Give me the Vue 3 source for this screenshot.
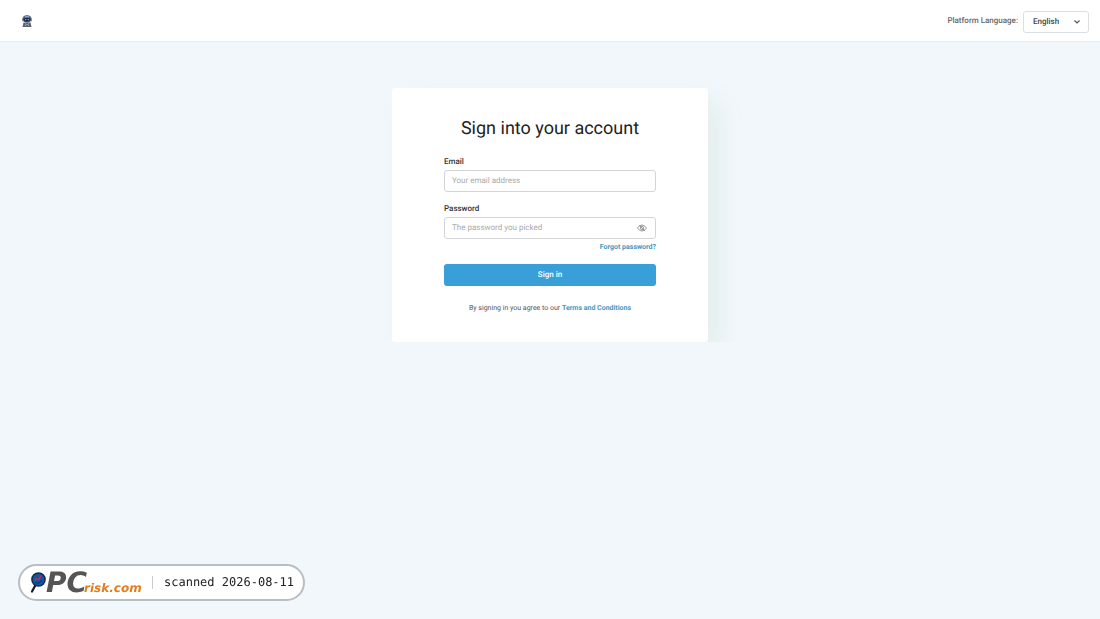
<script setup>
import { ref } from 'vue'

const language = ref('English')
const email = ref('')
const password = ref('')
const shown = ref(false)
</script>

<template>
  <div class="page">
    <header class="topbar">
      <a class="brand" href="#" aria-label="Home">
        <svg viewBox="0 0 20 24" width="10" height="12" aria-hidden="true">
          <rect x="0" y="5" width="4" height="8" rx="2" fill="#8b919a" />
          <rect x="16" y="5" width="4" height="8" rx="2" fill="#8b919a" />
          <path d="M3 2.500Q10-2 17 2.500L18 9Q17 15 10 15T2 9Z" fill="#33486b" />
          <path d="M5 2.500Q10 0 15 2.500V5H5Z" fill="#93a7c4" />
          <rect x="4" y="6" width="12" height="6" rx="3" fill="#14264a" />
          <circle cx="7.500" cy="9" r="1.300" fill="#8fc0f5" />
          <circle cx="12.500" cy="9" r="1.300" fill="#8fc0f5" />
          <path d="M3 15H17L19 24H1Z" fill="#5c626b" />
          <path d="M6 17L9 19L6 22M14 17L11 19L14 22" fill="none" stroke="#c5cad1" stroke-width="1.300" />
        </svg>
      </a>
      <div class="language">
        <label for="language">Platform Language:</label>
        <div class="select">
          <select id="language" v-model="language">
            <option>English</option>
          </select>
          <svg class="chevron" viewBox="0 0 8 8" width="8" height="8" aria-hidden="true">
            <path d="M1.500 2.500L4 5L6.500 2.500" fill="none" stroke="#555" stroke-width="1.200" />
          </svg>
        </div>
      </div>
    </header>

    <main class="content">
      <form class="card" @submit.prevent>
        <h1>Sign into your account</h1>
        <div class="field">
          <label for="email">Email</label>
          <input id="email" v-model="email" type="email" placeholder="Your email address" />
        </div>
        <div class="field">
          <label for="password">Password</label>
          <div class="secret">
            <input id="password" v-model="password" :type="shown ? 'text' : 'password'" placeholder="The password you picked" />
            <button class="reveal" type="button" aria-label="Show password" @click="shown = !shown">
              <svg viewBox="0 0 20 16" width="10" height="8" aria-hidden="true">
                <path d="M1 8Q5 2 10 2T19 8Q15 14 10 14T1 8Z" fill="none" stroke="#999" stroke-width="2" />
                <circle cx="10" cy="8" r="3.200" fill="none" stroke="#999" stroke-width="2" />
                <path d="M4 2L16 14" stroke="#999" stroke-width="2" />
              </svg>
            </button>
          </div>
        </div>
        <a class="forgot" href="#">Forgot password?</a>
        <button class="submit" type="submit">Sign in</button>
        <p class="terms">By signing in you agree to our <a href="#">Terms and Conditions</a></p>
      </form>
    </main>

    <aside class="stamp">
      <span class="logo">
        <svg viewBox="0 0 16 22" width="16" height="22" aria-hidden="true">
          <path d="M5.500 13L2 19.500" stroke="#111b2b" stroke-width="2.200" stroke-linecap="round" />
          <circle cx="8.500" cy="7.500" r="6.600" fill="#1556a4" stroke="#14284a" stroke-width="1.500" />
          <path d="M5 8.500L7 6.500L9 7.500L11 3.500" fill="none" stroke="#cf2945" stroke-width="1.300" />
          <path d="M5 10L8 11.500L12 8.500" fill="none" stroke="#0d3b7c" stroke-width="1.300" />
        </svg>
        <span class="pc">PC</span><span class="risk">risk.com</span>
      </span>
      <span class="rule"></span>
      <span class="date">scanned 2026-08-11</span>
    </aside>
  </div>
</template>

<style>
body {
  background: #f2f7fb;
}
</style>

<style scoped>
.page {
  min-height: 100vh;
  background: #f2f7fb;
  font-family: Roboto, "Liberation Sans", sans-serif;
  font-size: 8px;
  color: #222;
  text-rendering: geometricPrecision;
}
.page * {
  box-sizing: border-box;
  text-rendering: inherit;
}
.topbar {
  display: flex;
  align-items: center;
  justify-content: space-between;
  height: 42px;
  padding: 0 11px 0 22px;
  background: #fff;
  border-bottom: 1px solid #e9eef1;
}
.brand,
.brand svg {
  display: block;
}
.language {
  display: flex;
  align-items: center;
  gap: 5px;
}
.language label {
  font-size: 8px;
  font-weight: 500;
  color: #666;
}
.select {
  position: relative;
  padding-top: 2px;
}
select {
  display: block;
  appearance: none;
  width: 66px;
  height: 22px;
  padding: 0 20px 1px 9px;
  border: 1px solid #dcdfe2;
  border-radius: 3px;
  background: #fff;
  font: 500 8px Roboto, sans-serif;
  color: #444;
}
.chevron {
  position: absolute;
  top: 9px;
  right: 8px;
  pointer-events: none;
}
.content {
  display: flex;
  justify-content: center;
  padding: 46px 20px;
}
.card {
  display: flex;
  flex-direction: column;
  width: 100%;
  max-width: 316px;
  padding: 28px 52px 29px;
  border-radius: 3px;
  background: #fff;
  box-shadow: 12px 12px 24px rgba(120, 160, 130, 0.11);
  clip-path: inset(-20px -50px 0 -30px);
}
h1 {
  margin: 0 0 15px;
  font-size: 18px;
  font-weight: 400;
  line-height: 26px;
  text-align: center;
  white-space: nowrap;
}
.field {
  display: flex;
  flex-direction: column;
  margin-bottom: 12px;
}
.field label {
  margin-bottom: 3px;
  font-weight: 500;
  line-height: 10px;
  color: #333;
}
.field + .field {
  margin-bottom: 3px;
}
.field input {
  width: 100%;
  height: 22px;
  padding: 0 7px 1px;
  border: 1px solid #d3d5d8;
  border-radius: 3px;
  background: #fff;
  font: 400 8px Roboto, sans-serif;
  color: #222;
}
.field input::placeholder {
  color: #aaa;
}
.secret {
  position: relative;
}
.secret input {
  display: block;
}
.reveal {
  position: absolute;
  top: 7px;
  right: 9px;
  padding: 0;
  border: 0;
  background: none;
}
.reveal svg {
  display: block;
}
a {
  color: #4398bf;
  text-decoration: none;
}
.forgot {
  align-self: flex-end;
  margin-bottom: 12px;
  font-size: 7px;
  font-weight: 700;
  line-height: 10px;
}
.submit {
  height: 22px;
  padding: 0 0 1px;
  border: 0;
  border-radius: 3px;
  background: #389fd9;
  font: 500 8px Roboto, sans-serif;
  color: #fff;
}
.terms {
  margin: 17px 0 0;
  font-size: 7px;
  line-height: 10px;
  text-align: center;
  color: #555;
}
.terms a {
  font-weight: 700;
}
.stamp {
  position: fixed;
  bottom: 18px;
  left: 18px;
  display: flex;
  align-items: center;
  height: 37px;
  padding: 0 9px 0 10px;
  border: 2px solid #b9bec2;
  border-radius: 19px;
  background: #fff;
  white-space: nowrap;
}
.logo {
  display: flex;
  align-items: baseline;
  width: 113px;
  font-family: "DejaVu Sans", sans-serif;
  font-style: italic;
  font-weight: 700;
  line-height: 32px;
}
.logo svg {
  align-self: center;
}
.pc {
  padding-top: 5px;
  font-size: 28px;
  color: #555;
}
.risk {
  margin-left: -3px;
  font-size: 12px;
  color: #e57d1c;
}
.rule {
  width: 1px;
  height: 13px;
  margin: 0 11px 0 9px;
  background: #ccc;
}
.date {
  padding-bottom: 2px;
  font-family: "DejaVu Sans Mono", monospace;
  font-size: 12px;
  line-height: 16px;
  color: #222;
}
</style>
